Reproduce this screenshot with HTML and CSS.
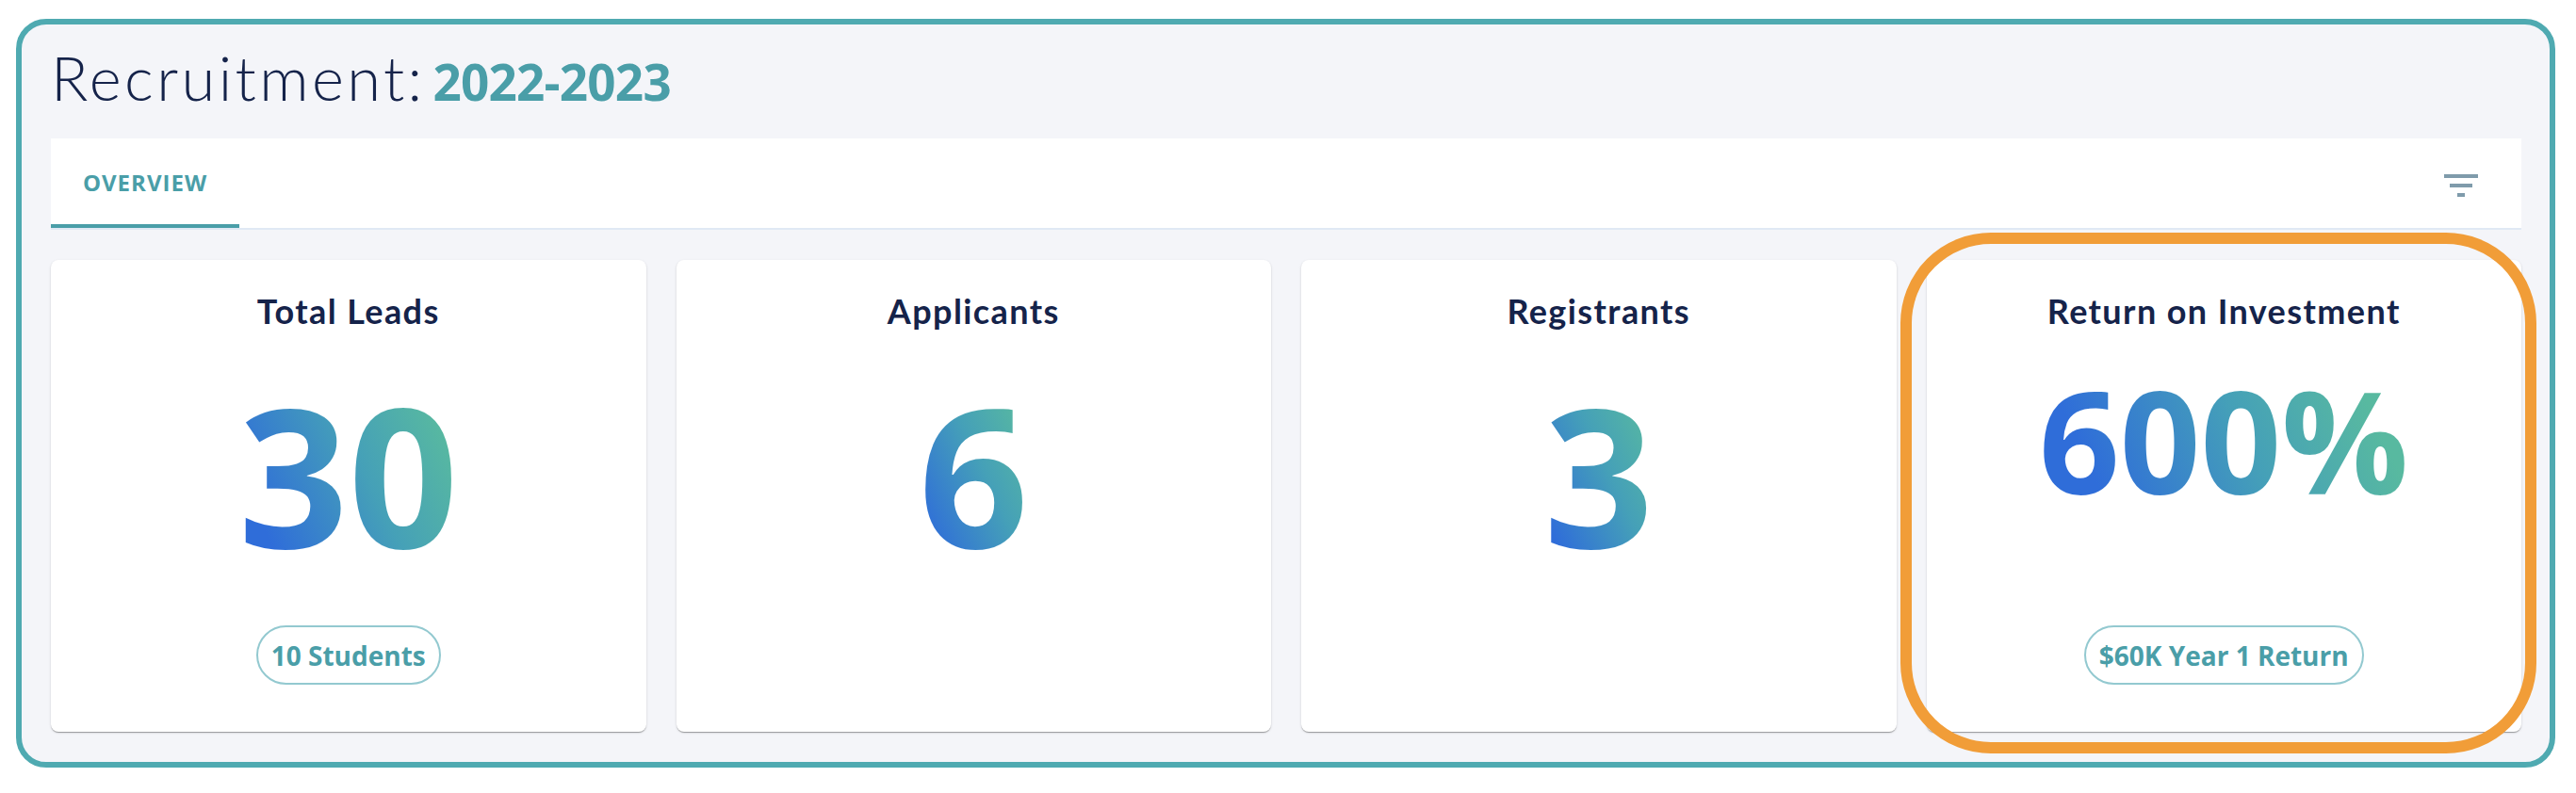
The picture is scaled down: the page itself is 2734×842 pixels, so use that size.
FILE: index.html
```html
<!DOCTYPE html>
<html lang="en">
<head>
<meta charset="utf-8">
<title>Recruitment 2022-2023</title>
<link rel="stylesheet" href="styles.css">
</head>
<body>
<div class="frame">
  <h1 class="title"><span class="title-main">Recruitment:</span> <span class="title-year">2022-2023</span></h1>
  <div class="tabbar">
    <div class="tab tab-active">OVERVIEW</div>
    <button class="filter-btn" aria-label="Filter">
      <svg class="filter-icon" viewBox="0 0 24 24" width="48" height="48"><path d="M10 18h4v-2h-4v2zM3 6v2h18V6H3zm3 7h12v-2H6v2z"/></svg>
    </button>
  </div>
  <div class="cards">
    <div class="card">
      <div class="card-title">Total Leads</div>
      <div class="num">30</div>
      <div class="chip">10 Students</div>
    </div>
    <div class="card">
      <div class="card-title">Applicants</div>
      <div class="num">6</div>
    </div>
    <div class="card">
      <div class="card-title">Registrants</div>
      <div class="num">3</div>
    </div>
    <div class="card card-highlight">
      <div class="card-title">Return on Investment</div>
      <div class="num num-small">600%</div>
      <div class="chip">$60K Year 1 Return</div>
      <span class="highlight-ring"></span>
    </div>
  </div>
</div>
</body>
</html>
```
FILE: styles.css
```css
html, body {
  margin: 0;
  padding: 0;
  background: #ffffff;
}

body {
  width: 2734px;
  height: 842px;
  overflow: hidden;
}

.frame {
  box-sizing: border-box;
  width: 2695px;
  margin: 20px 0 0 17px;
  border: 6px solid #4faab1;
  border-radius: 32px;
  background: #f4f5f9;
  padding: 17px 30px 32px 31px;
}

.title {
  margin: 0;
  height: 78px;
  line-height: 78px;
  font-weight: normal;
  white-space: nowrap;
}

.title-main {
  font-family: "Lato", "Noto Sans", sans-serif;
  font-weight: 300;
  font-size: 65px;
  color: #15234a;
  letter-spacing: 3.4px;
}

.title-year {
  font-family: "Open Sans", "Noto Sans", sans-serif;
  font-weight: 700;
  font-size: 53px;
  color: #4a9ea8;
  letter-spacing: -0.8px;
}

.tabbar {
  margin-top: 26px;
  height: 95px;
  background: #ffffff;
  border-bottom: 2px solid #e0e9f4;
  display: flex;
  align-items: stretch;
  justify-content: space-between;
  padding-right: 40px;
}

.tab {
  width: 200px;
  display: flex;
  align-items: center;
  justify-content: center;
  font-family: "Open Sans", "Noto Sans", sans-serif;
  font-weight: 700;
  font-size: 24px;
  letter-spacing: 1px;
  color: #4a9ea8;
  box-sizing: border-box;
  padding-top: 2px;
}

.tab-active {
  border-bottom: 4px solid #4a9ea8;
}

.filter-btn {
  background: none;
  border: 0;
  padding: 0;
  display: flex;
  align-items: center;
}

.filter-icon {
  display: block;
  fill: #7f9bab;
  margin-top: 4px;
}

.cards {
  margin-top: 32px;
  display: grid;
  grid-template-columns: repeat(4, 1fr);
  gap: 32px;
}

.card {
  position: relative;
  background: #ffffff;
  border-radius: 8px;
  box-shadow: 0 2px 1px -1px rgba(0,0,0,0.2), 0 1px 1px 0 rgba(0,0,0,0.14), 0 1px 3px 0 rgba(0,0,0,0.12);
  display: flex;
  flex-direction: column;
  align-items: center;
  padding: 33px 0 50px;
  min-height: 418px;
}

.card-title {
  font-family: "Lato", "Noto Sans", sans-serif;
  font-weight: 700;
  font-size: 36px;
  line-height: 43px;
  color: #15234a;
  letter-spacing: 1.4px;
  white-space: nowrap;
}

.num {
  margin-top: 13px;
  font-family: "Open Sans", "Noto Sans", sans-serif;
  font-weight: 700;
  font-size: 204px;
  line-height: 1.362;
  display: inline-block;
  background: linear-gradient(65deg, #2f6dd9 18%, #45a0b8 55%, #58b9a0 85%);
  -webkit-background-clip: text;
  background-clip: text;
  color: transparent;
}

.num-small {
  font-size: 150px;
}

.chip {
  margin-top: auto;
  box-sizing: border-box;
  height: 63px;
  padding: 0 14px;
  border: 2px solid #93c9d0;
  border-radius: 32px;
  display: flex;
  align-items: center;
  font-family: "Open Sans", "Noto Sans", sans-serif;
  font-weight: 700;
  font-size: 28px;
  color: #4a9ea8;
  white-space: nowrap;
}

.highlight-ring {
  position: absolute;
  left: -28px;
  right: -16px;
  top: -29px;
  bottom: -23px;
  border: 12px solid #f19d38;
  border-radius: 96px;
  pointer-events: none;
}
```
